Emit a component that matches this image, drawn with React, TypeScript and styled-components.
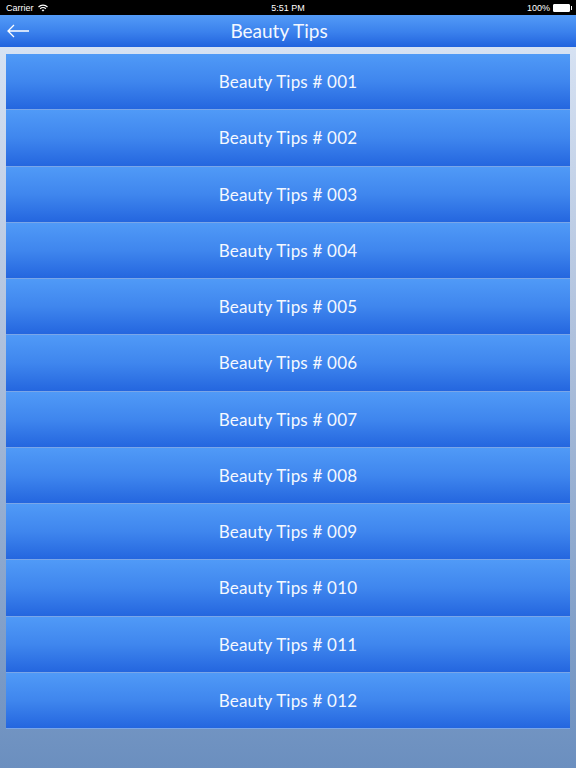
import styled, { createGlobalStyle } from "styled-components";

const GlobalStyle = createGlobalStyle`
  html, body {
    margin: 0;
    padding: 0;
  }
  body {
    font-family: "Lato", "Noto Sans", sans-serif;
  }
`;

const Screen = styled.div`
  width: 576px;
  height: 768px;
  display: flex;
  flex-direction: column;
  background: linear-gradient(to bottom, #dde7f6 0%, #a9bcd9 50%, #6b8fbf 100%);
  overflow: hidden;
`;

const StatusBar = styled.div`
  height: 15px;
  background: #000;
  color: #fff;
  display: grid;
  grid-template-columns: 1fr auto 1fr;
  align-items: center;
  padding: 0 6px;
  font-family: "Liberation Sans", Arial, sans-serif;
  font-size: 9px;
`;

const StatusLeft = styled.div`
  display: flex;
  align-items: center;
  gap: 4px;
`;

const StatusRight = styled.div`
  display: flex;
  align-items: center;
  justify-content: flex-end;
  gap: 3px;
`;

const Battery = styled.div`
  width: 15px;
  height: 6px;
  border: 1px solid #fff;
  border-radius: 1px;
  background: #fff;
  position: relative;
  &::after {
    content: "";
    position: absolute;
    right: -3px;
    top: 1px;
    width: 1px;
    height: 4px;
    background: #fff;
  }
`;

const NavBar = styled.div`
  height: 32px;
  background: linear-gradient(to bottom, #539bf7 0%, #3a80ec 55%, #2163de 100%);
  display: grid;
  grid-template-columns: 50px 1fr 68px;
  align-items: center;
  color: #fff;
`;

const BackButton = styled.div`
  display: flex;
  align-items: center;
  padding-left: 6px;
  height: 100%;
`;

const Title = styled.div`
  text-align: center;
  font-size: 19px;
  font-family: "Lato", "Noto Sans", sans-serif;
  color: #f4f8ff;
  padding-bottom: 1px;
`;

const List = styled.div`
  margin: 7px 6px 0;
  display: flex;
  flex-direction: column;
`;

const Row = styled.div`
  height: 55.25px;
  border-bottom: 1px solid #7aa6e8;
  background: linear-gradient(to bottom, #509af7 0%, #3f86ee 50%, #2466df 100%);
  display: flex;
  align-items: center;
  justify-content: center;
  color: #f4f8ff;
  font-size: 17px;
  letter-spacing: 0.2px;
`;

const items = Array.from({ length: 12 }, (_, i) => `Beauty Tips # ${String(i + 1).padStart(3, "0")}`);

export default function App() {
  return (
    <>
      <GlobalStyle />
      <Screen>
        <StatusBar>
          <StatusLeft>
            <span>Carrier</span>
            <svg width="10" height="8" viewBox="0 0 10 8">
              <path d="M0.5 3 A6.5 6.5 0 0 1 9.5 3" stroke="#fff" strokeWidth="1.2" fill="none" />
              <path d="M2.2 4.7 A4 4 0 0 1 7.8 4.7" stroke="#fff" strokeWidth="1.2" fill="none" />
              <path d="M3.6 6.3 L5 7.6 L6.4 6.3 A2 2 0 0 0 3.6 6.3 Z" fill="#fff" />
            </svg>
          </StatusLeft>
          <span>5:51 PM</span>
          <StatusRight>
            <span>100%</span>
            <Battery />
          </StatusRight>
        </StatusBar>
        <NavBar>
          <BackButton>
            <svg width="24" height="14" viewBox="0 0 24 14">
              <path d="M23 7 H2 M8 1 L2 7 L8 13" stroke="#fff" strokeWidth="1.3" fill="none" />
            </svg>
          </BackButton>
          <Title>Beauty Tips</Title>
          <div />
        </NavBar>
        <List>
          {items.map((label) => (
            <Row key={label}>{label}</Row>
          ))}
        </List>
      </Screen>
    </>
  );
}
